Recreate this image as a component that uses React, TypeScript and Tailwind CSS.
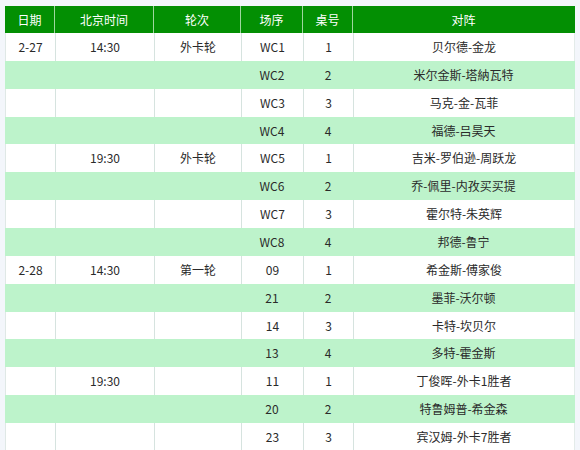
import React from "react";

type Row = { d: string; t: string; r: string; s: string; z: string; m: string };

const rows: Row[] = [
  { d: "2-27", t: "14:30", r: "外卡轮", s: "WC1", z: "1", m: "贝尔德-金龙" },
  { d: "", t: "", r: "", s: "WC2", z: "2", m: "米尔金斯-塔納瓦特" },
  { d: "", t: "", r: "", s: "WC3", z: "3", m: "马克-金-瓦菲" },
  { d: "", t: "", r: "", s: "WC4", z: "4", m: "福德-吕昊天" },
  { d: "", t: "19:30", r: "外卡轮", s: "WC5", z: "1", m: "吉米-罗伯逊-周跃龙" },
  { d: "", t: "", r: "", s: "WC6", z: "2", m: "乔-佩里-内孜买买提" },
  { d: "", t: "", r: "", s: "WC7", z: "3", m: "霍尔特-朱英辉" },
  { d: "", t: "", r: "", s: "WC8", z: "4", m: "邦德-鲁宁" },
  { d: "2-28", t: "14:30", r: "第一轮", s: "09", z: "1", m: "希金斯-傅家俊" },
  { d: "", t: "", r: "", s: "21", z: "2", m: "墨菲-沃尔顿" },
  { d: "", t: "", r: "", s: "14", z: "3", m: "卡特-坎贝尔" },
  { d: "", t: "", r: "", s: "13", z: "4", m: "多特-霍金斯" },
  { d: "", t: "19:30", r: "", s: "11", z: "1", m: "丁俊晖-外卡1胜者" },
  { d: "", t: "", r: "", s: "20", z: "2", m: "特鲁姆普-希金森" },
  { d: "", t: "", r: "", s: "23", z: "3", m: "宾汉姆-外卡7胜者" },
];

const cols = "grid grid-cols-[50px_99px_87px_62px_50px_221px]";

export default function App() {
  return (
    <div
      className="w-[580px] h-[450px] overflow-hidden bg-[#f3f6fb] pl-[5px] pt-[6px]"
      style={{ fontFamily: '"Noto Sans CJK SC", "Liberation Sans", sans-serif' }}
    >
      <div className="w-[570px] text-[12px] leading-none">
        <div className={`${cols} h-[27px] bg-[#038f03] text-white`}>
          {["日期", "北京时间", "轮次", "场序", "桌号", "对阵"].map((h, i) => (
            <div
              key={h}
              className={`flex items-center justify-center ${i < 5 ? "border-r border-[#9fd69f]" : ""}`}
            >
              {h}
            </div>
          ))}
        </div>
        {rows.map((row, idx) => {
          const green = idx % 2 === 1;
          const cells = [row.d, row.t, row.r, row.s, row.z, row.m];
          return (
            <div
              key={idx}
              className={`${cols} h-[27.86px] text-[#2a2a2a] ${
                green ? "bg-[#bdf3cb]" : "bg-white border-l border-[#dfe8e6]"
              }`}
            >
              {cells.map((c, i) => (
                <div
                  key={i}
                  className={`flex items-center justify-center ${
                    !green && i < 5 ? "border-r border-[#d6e3df]" : ""
                  } ${!green && i === 5 ? "border-r border-[#e3ebe9]" : ""}`}
                >
                  {c}
                </div>
              ))}
            </div>
          );
        })}
      </div>
    </div>
  );
}
